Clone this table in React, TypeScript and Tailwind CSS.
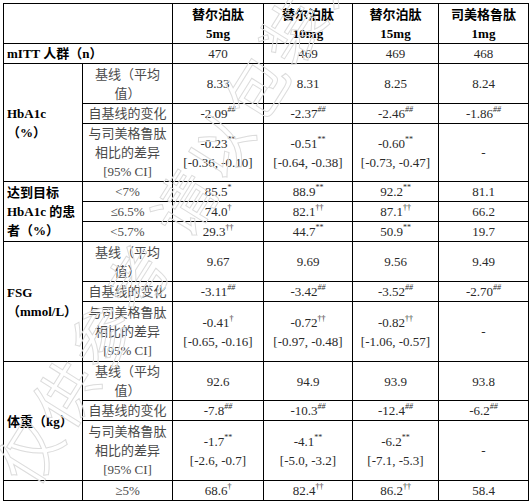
import React from 'react';

type Val = { v: string; s?: string; ci?: string };

const COLS = [
    { name: '替尔泊肽', dose: '5mg' },
    { name: '替尔泊肽', dose: '10mg' },
    { name: '替尔泊肽', dose: '15mg' },
    { name: '司美格鲁肽', dose: '1mg' },
];

const td = 'border border-black p-0 text-center align-middle text-[#2a2a2a]';
const lab = 'border border-black p-0 pl-[3px] text-left align-middle font-bold text-black';
const sub = 'border border-black p-0 text-center align-middle text-[#4a4a4a]';

const Cell = ({ d }: { d: Val }) => (
    <td className={td}>
        <div>
            {d.v}
            {d.s && <sup className={`text-[8px] -top-[6px] ${d.s.startsWith('#') ? 'italic' : ''}`}>{d.s}</sup>}
        </div>
        {d.ci && <div>{d.ci}</div>}
    </td>
);

const Baseline = () => (
    <td className={sub}>
        基线（平均<br />值）
    </td>
);

const Diff = () => (
    <td className={sub}>
        与司美格鲁肽<br />相比的差异<br />[95% CI]
    </td>
);

const Change = () => <td className={sub}>自基线的变化</td>;

const HBA_BASE: Val[] = [{ v: '8.33' }, { v: '8.31' }, { v: '8.25' }, { v: '8.24' }];
const HBA_CHG: Val[] = [{ v: '-2.09', s: '##' }, { v: '-2.37', s: '##' }, { v: '-2.46', s: '##' }, { v: '-1.86', s: '##' }];
const HBA_DIFF: Val[] = [
    { v: '-0.23', s: '**', ci: '[-0.36, -0.10]' },
    { v: '-0.51', s: '**', ci: '[-0.64, -0.38]' },
    { v: '-0.60', s: '**', ci: '[-0.73, -0.47]' },
    { v: '-' },
];
const TARGET: { label: string; vals: Val[] }[] = [
    { label: '<7%', vals: [{ v: '85.5', s: '*' }, { v: '88.9', s: '**' }, { v: '92.2', s: '**' }, { v: '81.1' }] },
    { label: '≤6.5%', vals: [{ v: '74.0', s: '†' }, { v: '82.1', s: '††' }, { v: '87.1', s: '††' }, { v: '66.2' }] },
    { label: '<5.7%', vals: [{ v: '29.3', s: '††' }, { v: '44.7', s: '**' }, { v: '50.9', s: '**' }, { v: '19.7' }] },
];
const FSG_BASE: Val[] = [{ v: '9.67' }, { v: '9.69' }, { v: '9.56' }, { v: '9.49' }];
const FSG_CHG: Val[] = [{ v: '-3.11', s: '##' }, { v: '-3.42', s: '##' }, { v: '-3.52', s: '##' }, { v: '-2.70', s: '##' }];
const FSG_DIFF: Val[] = [
    { v: '-0.41', s: '†', ci: '[-0.65, -0.16]' },
    { v: '-0.72', s: '††', ci: '[-0.97, -0.48]' },
    { v: '-0.82', s: '††', ci: '[-1.06, -0.57]' },
    { v: '-' },
];
const WT_BASE: Val[] = [{ v: '92.6' }, { v: '94.9' }, { v: '93.9' }, { v: '93.8' }];
const WT_CHG: Val[] = [{ v: '-7.8', s: '##' }, { v: '-10.3', s: '##' }, { v: '-12.4', s: '##' }, { v: '-6.2', s: '##' }];
const WT_DIFF: Val[] = [
    { v: '-1.7', s: '**', ci: '[-2.6, -0.7]' },
    { v: '-4.1', s: '**', ci: '[-5.0, -3.2]' },
    { v: '-6.2', s: '**', ci: '[-7.1, -5.3]' },
    { v: '-' },
];
const WT_5: Val[] = [{ v: '68.6', s: '†' }, { v: '82.4', s: '††' }, { v: '86.2', s: '††' }, { v: '58.4' }];

export default function App() {
    return (
        <div className="relative w-[531px] h-[503px] overflow-hidden bg-white font-['Liberation_Serif','Noto_Sans_CJK_SC',serif] text-[13px] leading-[19px]">
            <div className="pt-[3px] pl-[3px]">
                <table className="table-fixed border-collapse border border-black w-[525px]">
                    <colgroup>
                        <col className="w-[79px]" />
                        <col className="w-[90px]" />
                        <col className="w-[91px]" />
                        <col className="w-[89px]" />
                        <col className="w-[86px]" />
                        <col className="w-[90px]" />
                    </colgroup>
                    <tbody>
                        <tr className="h-[40px]">
                            <td colSpan={2} className="border border-black p-0" />
                            {COLS.map((c, i) => (
                                <td key={i} className="border border-black p-0 text-center align-middle font-bold text-black">
                                    <div>{c.name}</div>
                                    <div>{c.dose}</div>
                                </td>
                            ))}
                        </tr>
                        <tr className="h-[20px]">
                            <td colSpan={2} className={lab}>mITT 人群（n）</td>
                            {['470', '469', '469', '468'].map((n, i) => <Cell key={i} d={{ v: n }} />)}
                        </tr>

                        <tr className="h-[40px]">
                            <td rowSpan={3} className={lab}>HbA1c<br />（%）</td>
                            <Baseline />
                            {HBA_BASE.map((d, i) => <Cell key={i} d={d} />)}
                        </tr>
                        <tr className="h-[20px]">
                            <Change />
                            {HBA_CHG.map((d, i) => <Cell key={i} d={d} />)}
                        </tr>
                        <tr className="h-[58px]">
                            <Diff />
                            {HBA_DIFF.map((d, i) => <Cell key={i} d={d} />)}
                        </tr>

                        {TARGET.map((r, ri) => (
                            <tr key={ri} className="h-[20px]">
                                {ri === 0 && (
                                    <td rowSpan={3} className={lab}>达到目标<br />HbA1c 的患<br />者（%）</td>
                                )}
                                <td className={sub}>{r.label}</td>
                                {r.vals.map((d, i) => <Cell key={i} d={d} />)}
                            </tr>
                        ))}

                        <tr className="h-[40px]">
                            <td rowSpan={3} className={lab}>FSG<br />（mmol/L）</td>
                            <Baseline />
                            {FSG_BASE.map((d, i) => <Cell key={i} d={d} />)}
                        </tr>
                        <tr className="h-[20px]">
                            <Change />
                            {FSG_CHG.map((d, i) => <Cell key={i} d={d} />)}
                        </tr>
                        <tr className="h-[60px]">
                            <Diff />
                            {FSG_DIFF.map((d, i) => <Cell key={i} d={d} />)}
                        </tr>

                        <tr className="h-[39px]">
                            <td rowSpan={3} className={lab}>体重（kg）</td>
                            <Baseline />
                            {WT_BASE.map((d, i) => <Cell key={i} d={d} />)}
                        </tr>
                        <tr className="h-[19px]">
                            <Change />
                            {WT_CHG.map((d, i) => <Cell key={i} d={d} />)}
                        </tr>
                        <tr className="h-[60px]">
                            <Diff />
                            {WT_DIFF.map((d, i) => <Cell key={i} d={d} />)}
                        </tr>
                        <tr className="h-[19px]">
                            <td className="border border-black p-0" />
                            <td className={sub}>≥5%</td>
                            {WT_5.map((d, i) => <Cell key={i} d={d} />)}
                        </tr>
                    </tbody>
                </table>
            </div>

            {/* watermark */}
            <div
                aria-hidden
                className="pointer-events-none absolute left-[10px] top-[445px] origin-left -rotate-[58deg] whitespace-nowrap font-['Noto_Sans_CJK_SC',sans-serif] text-[62px] leading-none text-transparent tracking-[6px] [-webkit-text-stroke:1px_#dcdcdc]"
            >
                仅供参考 请以包装为准
            </div>
        </div>
    );
}
